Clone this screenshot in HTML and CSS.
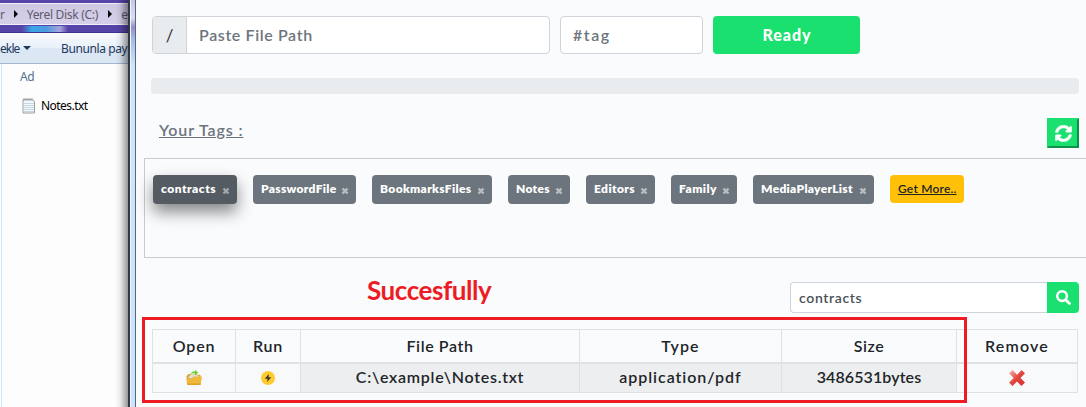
FILE: index.html
```html
<!DOCTYPE html>
<html lang="en">
<head>
<meta charset="utf-8">
<title>File tags</title>
<link rel="stylesheet" href="styles.css">
</head>
<body>
<div class="screen">
  <aside class="explorer">
    <div class="address"><div class="crumbs"><span class="crumb-first">r</span><i class="arrow"></i><span class="crumb-disk">Yerel Disk (C:)</span><i class="arrow"></i><span class="crumb-last">e</span></div></div>
    <div class="glass"></div>
    <div class="toolbar"><span class="tool-add">ekle</span><i class="caret"></i><span class="tool-share">Bununla pay</span></div>
    <div class="files">
      <div class="column-name">Ad</div>
      <div class="file">
        <svg width="14" height="17" viewBox="0 0 14 17"><path d="M1 2.5h9.500l2 2.200v11.300H1z" fill="#f5f7f8" stroke="#9b9fa0"/><path d="M2 6.500h10M2 8.500h10M2 10.500h10M2 12.500h10M2 14.500h10" stroke="#c3d8e3"/><path d="M2 1v3M4 1v3M6 1v3M8 1v3M10 1v3" stroke="#a8a8a8"/></svg>
        <span>Notes.txt</span>
      </div>
    </div>
  </aside>
  <div class="frame"></div>
  <main class="app">
    <div class="form-row">
      <div class="path-group"><span class="slash">/</span><div class="path-input"><span class="t-path">Paste File Path</span></div></div>
      <div class="tag-input"><span class="t-tag">#tag</span></div>
      <button class="ready"><span class="t-ready">Ready</span></button>
    </div>
    <div class="progress"></div>
    <div class="tags-head">
      <span class="t-title">Your Tags :</span>
      <button class="refresh"><svg width="17" height="17" viewBox="0 0 512 512" fill="#fff" stroke="#fff" stroke-width="14"><path d="M370.700 133.300C339.500 104 298.900 88 255.800 88c-77.500.1-144.300 53.200-162.800 126.900-1.300 5.400-6.100 9.100-11.700 9.100H24.100c-7.500 0-13.200-6.800-11.800-14.200C33.900 94.900 134.800 8 256 8c66.400 0 126.800 26.100 171.300 68.700L463 41c15.100-15.100 41-4.400 41 17v134c0 13.300-10.700 24-24 24H346c-21.400 0-32.100-25.900-17-41zM32 296h134c21.400 0 32.100 25.900 17 41l-41.800 41.800c31.300 29.300 71.800 45.300 114.900 45.300 77.400-.1 144.300-53.100 162.800-126.800 1.300-5.400 6.100-9.200 11.700-9.200h57.300c7.500 0 13.200 6.800 11.800 14.200C478.100 417.100 377.200 504 256 504c-66.400 0-126.800-26.100-171.300-68.700L49 471c-15.100 15.100-41 4.400-41-17V320c0-13.300 10.700-24 24-24z"/></svg></button>
    </div>
    <div class="tag-box">
      <span class="tag active w-contracts">contracts<svg class="x" viewBox="0 0 8 8"><path d="M1.500 1.500l5 5M6.500 1.500l-5 5"/></svg></span>
      <span class="tag w-password">PasswordFile<svg class="x" viewBox="0 0 8 8"><path d="M1.500 1.500l5 5M6.500 1.500l-5 5"/></svg></span>
      <span class="tag w-bookmarks">BookmarksFiles<svg class="x" viewBox="0 0 8 8"><path d="M1.500 1.500l5 5M6.500 1.500l-5 5"/></svg></span>
      <span class="tag w-notes">Notes<svg class="x" viewBox="0 0 8 8"><path d="M1.500 1.500l5 5M6.500 1.500l-5 5"/></svg></span>
      <span class="tag w-editors">Editors<svg class="x" viewBox="0 0 8 8"><path d="M1.500 1.500l5 5M6.500 1.500l-5 5"/></svg></span>
      <span class="tag w-family">Family<svg class="x" viewBox="0 0 8 8"><path d="M1.500 1.500l5 5M6.500 1.500l-5 5"/></svg></span>
      <span class="tag w-media">MediaPlayerList<svg class="x" viewBox="0 0 8 8"><path d="M1.500 1.500l5 5M6.500 1.500l-5 5"/></svg></span>
      <a class="more">Get More..</a>
    </div>
    <div class="search-row">
      <strong class="success">Succesfully</strong>
      <div class="search"><div class="query">contracts</div><button class="find"><svg width="15" height="15" viewBox="0 0 512 512"><circle cx="208" cy="208" r="165" fill="none" stroke="#fff" stroke-width="85"/><path d="M330 330L460 460" stroke="#fff" stroke-width="95" stroke-linecap="round"/></svg></button></div>
    </div>
    <div class="table">
      <div class="cell head"><span class="h-open">Open</span></div>
      <div class="cell head"><span class="h-run">Run</span></div>
      <div class="cell head"><span class="h-path">File Path</span></div>
      <div class="cell head"><span class="h-type">Type</span></div>
      <div class="cell head"><span class="h-size">Size</span></div>
      <div class="cell head"><span class="h-remove">Remove</span></div>
      <div class="cell action"><svg width="16" height="16" viewBox="0 0 16 16"><path d="M.5 6l2-2h5l7 1v9H1z" fill="#e0a43a"/><path d="M2 8l3.500-4 3 .5L13 6l-1 3z" fill="#dfe3dc"/><path d="M.5 9.500l5-1 2-2H16l-1.500 8.500H1.500z" fill="#efb93c"/><path d="M1.300 13.500h13.400L14.500 15h-13z" fill="#dfa024"/><path d="M4.500 3.800C5.500 1.600 7.500 1.300 9 1.500V0l3.200 2.600L9 5.200V3.500C7.500 3 6 3.200 4.500 3.800z" fill="#66cf22"/></svg></div>
      <div class="cell action"><svg width="16" height="16" viewBox="0 0 16 16"><circle cx="8" cy="8" r="7" fill="#ffca2e"/><path d="M8.800 4L4.800 8.800h2.700L7.200 12l4-4.800H8.500z" fill="#39362b"/></svg></div>
      <div class="cell"><span class="d-path">C:\example\Notes.txt</span></div>
      <div class="cell"><span class="d-type">application/pdf</span></div>
      <div class="cell"><span class="d-size">3486531bytes</span></div>
      <div class="cell action"><svg width="16" height="16" viewBox="0 0 16 16"><defs><linearGradient id="red" x2="1" y2="1"><stop stop-color="#f3bcb5"/><stop offset=".5" stop-color="#e2453f"/><stop offset="1" stop-color="#d93030"/></linearGradient></defs><path d="M3.500 0L8 4.700 12.500 0 16 3.300 11.500 8 16 12.600 12.500 16 8 11.500 3.500 16 0 12.600 4.600 8 0 3.300z" fill="url(#red)"/></svg></div>
    </div>
    <div class="highlight"></div>
  </main>
</div>
</body>
</html>
```
FILE: styles.css
```css
* { box-sizing: border-box; }
body { margin: 0; font-family: Lato, sans-serif; color: #212529; }
button { padding: 0; font: inherit; }
i { font-style: normal; }
svg { display: block; }
.screen { display: flex; width: 1086px; height: 407px; overflow: hidden; position: relative; background: #fafbfd; }
.explorer { width: 128px; flex: none; font: 12px "Noto Sans", sans-serif; white-space: nowrap; overflow: hidden; background: #fdfdfd; position: relative; }
.explorer::after { content: ""; position: absolute; inset: 0; background: linear-gradient(90deg, transparent 115px, #0001 120px, #0006 128px); }
.address { height: 26px; background: #5744a8; padding-top: 3px; }
.crumbs { height: 22px; display: flex; align-items: center; background: linear-gradient(#cfc8e3, #d6cfe9); border: solid #f3effa; border-width: 1px 0; color: #5c5a6c; }
.crumb-first { width: 14px; }
.arrow { border-left: 4px solid #080808; border-top: 4px solid transparent; border-bottom: 4px solid transparent; }
.crumb-disk { width: 92px; padding-left: 9px; letter-spacing: -.3px; }
.crumb-last { padding-left: 9px; }
.glass { height: 7px; border-bottom: 1px solid #41328d; background: linear-gradient(90deg, transparent 22px, #38a7ea 32px, #4c9adf 46px, #a6a4da 60px, transparent 68px), #5744a8; }
.toolbar { height: 31px; display: flex; align-items: center; background: linear-gradient(#f9fbfe, #e8f0fa 50%, #dce7f5 52%, #dce7f4); border-bottom: 1px solid #a5b8d0; color: #1e395b; }
.tool-add { width: 23px; letter-spacing: -.9px; }
.caret { border-top: 4px solid #1e395b; border-left: 4px solid transparent; border-right: 4px solid transparent; }
.tool-share { margin-left: 30px; letter-spacing: -.4px; }
.files { height: 343px; margin-left: 1px; border-left: 1px solid #d6e5f5; }
.column-name { padding: 4px 0 0 18px; color: #56708f; letter-spacing: -.3px; }
.file { display: flex; align-items: center; gap: 5px; margin: 12px 0 0 20px; color: #000; letter-spacing: -.55px; }
.frame { width: 8px; flex: none; border-left: 2px solid #34383f; border-right: 1px solid #59677a; background: linear-gradient(#c8c5ee 0, #dcdcf5 18px, #958dd0 27px, #a7bfe5 40px, #cce4fc 65px, #cce3fc); box-shadow: inset 1px 0 #eef6ff; }
.app { width: 950px; flex: none; padding: 16px 0 0 8px; }
.form-row { display: flex; gap: 10px; margin-left: 8px; height: 38px; font-size: 16px; font-weight: 600; color: #6c757d; }
.path-group { display: flex; width: 398px; border: 1px solid #ced4da; border-radius: 4px; background: #fff; overflow: hidden; }
.slash { width: 34px; display: grid; place-items: center; background: #e9ecef; border-right: 1px solid #ced4da; color: #333; font-weight: 400; font-size: 17px; }
.path-input, .tag-input { display: flex; align-items: center; padding: 0 0 2px 12px; }
.tag-input { width: 143px; border: 1px solid #ced4da; border-radius: 4px; background: #fff; }
.ready { width: 147px; padding-bottom: 1px; border: 0; border-radius: 4px; background: #1ae06f; color: #fff; font-weight: 900; }
.t-path { letter-spacing: .62px; }
.t-tag { letter-spacing: 1.5px; }
.t-ready { letter-spacing: .9px; margin-right: -.9px; }
.t-title { letter-spacing: .88px; }
.progress { width: 928px; height: 16px; margin: 24px 0 24px 7px; border-radius: 4px; background: #e9ecef; }
.tags-head { display: flex; justify-content: space-between; width: 935px; height: 40px; padding-left: 15px; color: #6c757d; font-size: 16px; font-weight: 600; text-decoration: underline; line-height: 24px; }
.refresh { width: 32px; height: 30px; display: grid; place-items: center; background: #1ae06f; border: solid; border-color: #1ae06f #128f4b #128f4b #1ae06f; border-width: 2px; }
.tag-box { width: 960px; height: 100px; border: 1px solid #c8cacd; padding: 16px 8px; display: flex; gap: 16px; align-items: flex-start; font-size: 12px; font-weight: 800; white-space: nowrap; }
.tag { flex: none; height: 29px; padding: 0 7px 0 8px; display: flex; justify-content: space-between; line-height: 27px; border-radius: 4px; background: #6c757d; color: #fff; }
.x { width: 8px; height: 8px; margin-top: 12px; fill: none; stroke: #b9bec2; stroke-width: 2.4; flex: none; }
.active { background: #545b62; box-shadow: 0 8px 16px #0007; }
.active .x { stroke: #a5a9ad; }
.w-contracts { width: 84px; letter-spacing: .5px; }
.w-password { width: 103px; letter-spacing: .3px; }
.w-bookmarks { width: 120px; letter-spacing: .36px; }
.w-notes { width: 62px; letter-spacing: .3px; }
.w-editors { width: 69px; letter-spacing: .4px; }
.w-family { width: 66px; letter-spacing: .45px; }
.w-media { width: 121px; letter-spacing: .3px; }
.more { width: 74px; height: 28px; padding-left: 8px; border-radius: 4px; background: #ffc107; color: #212529; text-decoration: underline; line-height: 27px; font-weight: 600; letter-spacing: .2px; }
.search-row { display: flex; justify-content: space-between; width: 935px; height: 71px; padding: 24px 0 0 223px; }
.success { color: #ed1c24; font-size: 26px; line-height: 17px; font-weight: 700; letter-spacing: -.45px; }
.search { display: flex; width: 289px; height: 31px; }
.query { flex: 1; border: 1px solid #ced4da; border-right: 0; border-radius: 4px 0 0 4px; background: #fff; padding-left: 8px; color: #495057; font-size: 14px; font-weight: 600; line-height: 29px; letter-spacing: .65px; }
.find { width: 32px; display: grid; place-items: center; border: 0; border-radius: 0 4px 4px 0; background: #1ae06f; }
.table { display: grid; grid-template-columns: 83px 65px 279px 202px 175px 121px; grid-template-rows: 34px 29px; width: 926px; height: 64px; margin-left: 8px; border: solid #dee2e6; border-width: 1px 0 0 1px; font-size: 16px; font-weight: 600; }
.cell { display: grid; place-items: center; padding-bottom: 4px; border: solid #dee2e6; border-width: 0 1px 1px 0; background: #edeef0; }
.head { border-bottom-width: 2px; background: #fafbfd; padding: 0 0 1px; }
.action { background: #f8f9fb; padding: 0; }
.h-open, .h-run { letter-spacing: .8px; }
.h-path { letter-spacing: .6px; }
.h-type { letter-spacing: 1.1px; }
.h-size { letter-spacing: .6px; }
.h-remove { letter-spacing: 1.2px; }
.d-path { letter-spacing: .72px; }
.d-type { letter-spacing: .95px; }
.d-size { letter-spacing: .1px; }
.highlight { position: absolute; left: 142px; top: 317px; width: 825px; height: 86px; border: 3px solid #ed1c24; }
```
